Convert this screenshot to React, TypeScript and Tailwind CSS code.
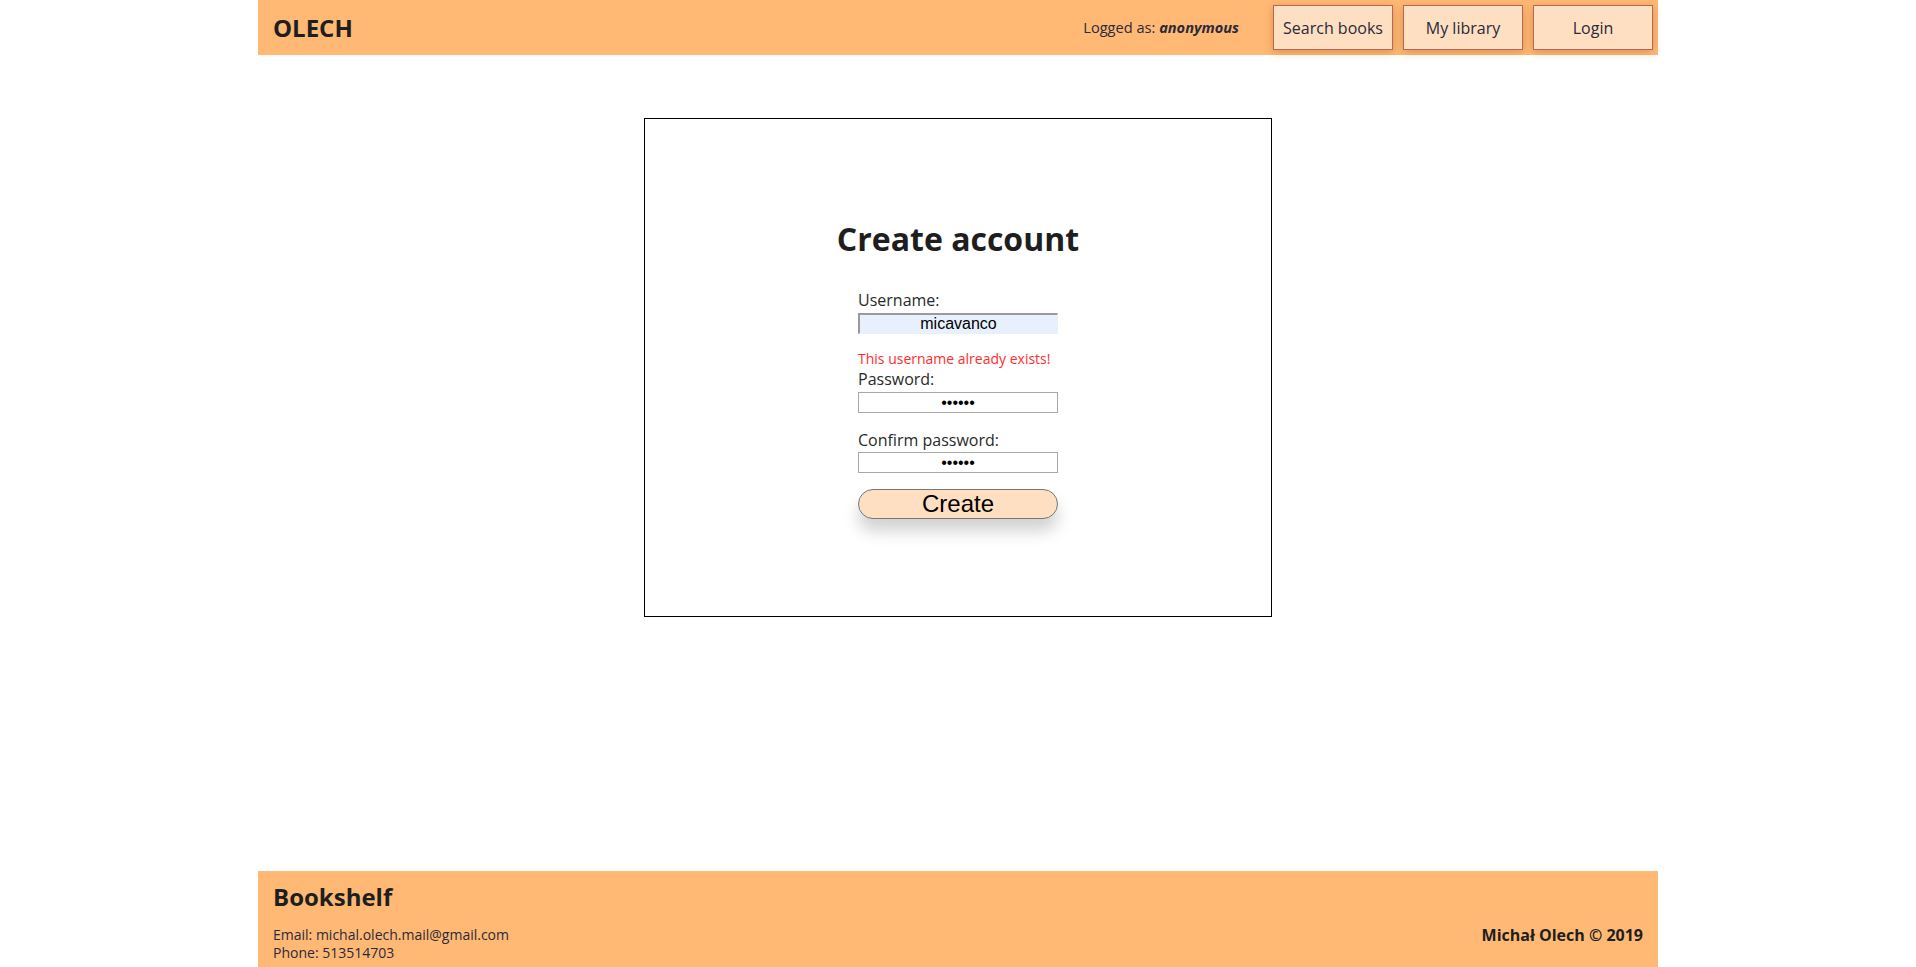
import React from 'react';

const font = { fontFamily: '"Open Sans", "Liberation Sans", sans-serif' };
const arial = { fontFamily: '"Liberation Sans", Arial, sans-serif' };

function NavButton({ label }: { label: string }) {
  return (
    <button className="w-[120px] h-[45px] m-[5px] border border-[#b4675a] bg-[#ffdfc1] text-[16px] text-[#2a2a3a] shadow-[0_2px_8px_rgba(150,80,20,0.35)]">
      {label}
    </button>
  );
}

export default function App() {
  return (
    <div className="min-h-screen bg-white text-[#222]" style={font}>
      {/* Header */}
      <header className="w-[1400px] mx-auto h-[55px] bg-[#ffb974] flex items-center pl-[15px]">
        <div className="text-[24px] font-bold text-[#1e1e1e]">OLECH</div>
        <div className="ml-auto mr-[29px] text-[14.6px] text-[#2a2a3a]">
          Logged as: <span className="font-bold italic">anonymous</span>
        </div>
        <NavButton label="Search books" />
        <NavButton label="My library" />
        <NavButton label="Login" />
      </header>

      {/* Main */}
      <main className="h-[816px] pt-[63px]">
        <div className="w-[628px] h-[499px] mx-auto border border-black flex flex-col items-center pt-[98px]">
          <h1 className="text-[32px] font-bold text-[#1e1e1e] leading-[44px]">Create account</h1>

          <form className="w-[200px] mt-[28px]" onSubmit={(e) => e.preventDefault()}>
            <label className="block text-[16px] leading-[22px] text-[#2a2a2a]">Username:</label>
            <input
              readOnly
              value="micavanco"
              className="block mt-[2px] w-[200px] h-[21px] text-center text-[16px] text-black bg-[#e8f0fe] border-t-2 border-l-2 border-b border-r border-t-[#9a9a9a] border-l-[#9a9a9a] border-b-[#e8f0fe] border-r-[#e8f0fe] outline-none"
              style={arial}
            />
            <div className="mt-[15px] text-[14px] leading-[19px] text-[#ff2d2d]">This username already exists!</div>
            <label className="block text-[16px] leading-[22px] text-[#2a2a2a]">Password:</label>
            <input
              readOnly
              type="password"
              value="secret"
              className="block mt-[2px] w-[200px] h-[21px] text-center text-[16px] text-black bg-white border border-[#a9a9a9] outline-none"
              style={arial}
            />
            <label className="block mt-[16px] text-[16px] leading-[22px] text-[#2a2a2a]">Confirm password:</label>
            <input
              readOnly
              type="password"
              value="secret"
              className="block mt-[1px] w-[200px] h-[21px] text-center text-[16px] text-black bg-white border border-[#a9a9a9] outline-none"
              style={arial}
            />
            <button
              className="block mt-[16px] w-[200px] h-[30px] rounded-full border border-[#777] bg-[#ffdfc1] text-[24px] leading-[26px] text-black shadow-[0_12px_16px_rgba(0,0,0,0.18)]"
              style={arial}
            >
              Create
            </button>
          </form>
        </div>
      </main>

      {/* Footer */}
      <footer className="w-[1400px] mx-auto bg-[#ffb974] px-[15px] pt-[10px] pb-4 text-[#222]">
        <div className="text-[24px] font-bold leading-[32px] text-[#1e1e1e]">Bookshelf</div>
        <div className="flex justify-between items-center mt-[13px]">
          <div className="text-[14px] leading-[18px] text-[#2a2a3a]">
            <div>Email: michal.olech.mail@gmail.com</div>
            <div>Phone: 513514703</div>
          </div>
          <div className="self-start text-[16px] leading-[18px] font-bold text-[#1e1e1e]">Michał Olech © 2019</div>
        </div>
      </footer>
    </div>
  );
}
